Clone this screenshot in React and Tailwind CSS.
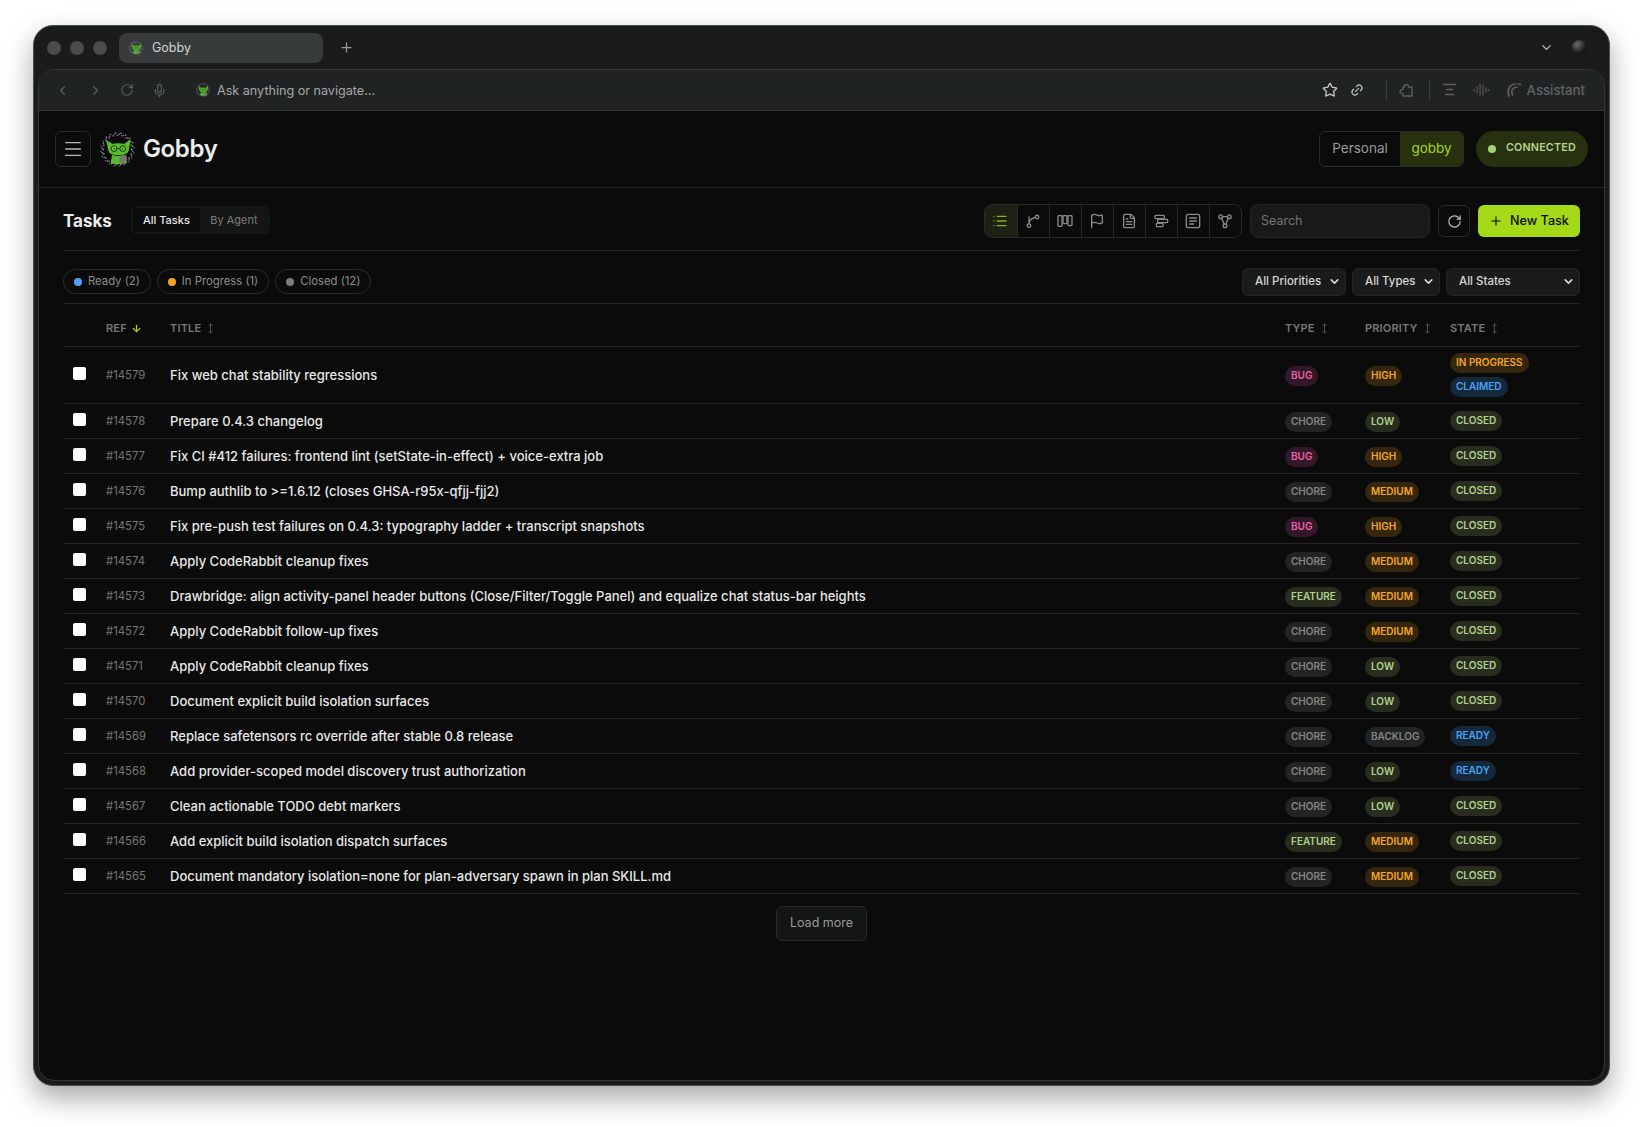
import React from "react";
import { ChevronLeft, ChevronRight, RotateCw, Mic, Star, Link2, Plus, ChevronDown, Menu, ArrowDown, MoveVertical, List, Flag, FileText } from "lucide-react";

const rows = [
  ["#14579", "Fix web chat stability regressions", "BUG", "HIGH", ["IN PROGRESS", "CLAIMED"]],
  ["#14578", "Prepare 0.4.3 changelog", "CHORE", "LOW", ["CLOSED"]],
  ["#14577", "Fix CI #412 failures: frontend lint (setState-in-effect) + voice-extra job", "BUG", "HIGH", ["CLOSED"]],
  ["#14576", "Bump authlib to >=1.6.12 (closes GHSA-r95x-qfjj-fjj2)", "CHORE", "MEDIUM", ["CLOSED"]],
  ["#14575", "Fix pre-push test failures on 0.4.3: typography ladder + transcript snapshots", "BUG", "HIGH", ["CLOSED"]],
  ["#14574", "Apply CodeRabbit cleanup fixes", "CHORE", "MEDIUM", ["CLOSED"]],
  ["#14573", "Drawbridge: align activity-panel header buttons (Close/Filter/Toggle Panel) and equalize chat status-bar heights", "FEATURE", "MEDIUM", ["CLOSED"]],
  ["#14572", "Apply CodeRabbit follow-up fixes", "CHORE", "MEDIUM", ["CLOSED"]],
  ["#14571", "Apply CodeRabbit cleanup fixes", "CHORE", "LOW", ["CLOSED"]],
  ["#14570", "Document explicit build isolation surfaces", "CHORE", "LOW", ["CLOSED"]],
  ["#14569", "Replace safetensors rc override after stable 0.8 release", "CHORE", "BACKLOG", ["READY"]],
  ["#14568", "Add provider-scoped model discovery trust authorization", "CHORE", "LOW", ["READY"]],
  ["#14567", "Clean actionable TODO debt markers", "CHORE", "LOW", ["CLOSED"]],
  ["#14566", "Add explicit build isolation dispatch surfaces", "FEATURE", "MEDIUM", ["CLOSED"]],
  ["#14565", "Document mandatory isolation=none for plan-adversary spawn in plan SKILL.md", "CHORE", "MEDIUM", ["CLOSED"]],
];

const badgeStyles = {
  BUG: "bg-[#33182a] text-[#ec5fa9]",
  HIGH: "bg-[#35270f] text-[#f5a524]",
  MEDIUM: "bg-[#35270f] text-[#f5a524]",
  "IN PROGRESS": "bg-[#35270f] text-[#f5a524]",
  CLAIMED: "bg-[#14293b] text-[#4aa3f5]",
  READY: "bg-[#14293b] text-[#4aa3f5]",
  CHORE: "bg-[#222323] text-[#858585]",
  BACKLOG: "bg-[#222323] text-[#858585]",
  LOW: "bg-[#282d20] text-[#b2d28a]",
  CLOSED: "bg-[#282d20] text-[#b2d28a]",
  FEATURE: "bg-[#282d20] text-[#b2d28a]",
};

function Badge({ label }) {
  return (
    <span className={`flex h-5 w-fit items-center rounded-full px-[6px] text-[10px] font-semibold ${badgeStyles[label]}`}>
      {label}
    </span>
  );
}

function Logo({ size }) {
  const dots = [];
  for (let i = 0; i < 60; i++) {
    const a = (i / 60) * Math.PI * 2;
    const s = Math.sin(a);
    const top = s < -0.55;
    const c = top ? (i % 2 ? "#c79be0" : "#e3c6ec") : i % 3 === 0 ? "#e6e6e6" : i % 3 === 1 ? "#9fcfdc" : "#7d8f96";
    const r = 16.4 + (i % 3) * 1.3;
    dots.push(<circle key={i} cx={20 + Math.cos(a) * r} cy={20 + s * r} r={0.75} fill={c} />);
  }
  return (
    <svg width={size} height={size} viewBox="0 0 40 40" className="shrink-0">
      {dots}
      <path d="M7 9 L14 13.500 Q21 12 28 13.500 L35 8 L33 21 Q31 26.500 21 26.500 Q11 26.500 9.500 21 Z" fill="#57bb2c" />
      <path d="M14 26 Q21 29 28 26 L31 35 Q21 38.500 12 35 Z" fill="#57bb2c" />
      <circle cx="16" cy="19" r="3.3" fill="#62c436" stroke="#0e150a" strokeWidth="0.9" />
      <circle cx="26" cy="19" r="3.3" fill="#62c436" stroke="#0e150a" strokeWidth="0.9" />
      <path d="M19.300 19 H22.700" stroke="#0e150a" strokeWidth="0.9" />
      <circle cx="16.300" cy="19.200" r="0.7" fill="#0e150a" />
      <circle cx="25.700" cy="19.200" r="0.7" fill="#0e150a" />
      <path d="M22 27.500 L30 26 L31 32 L25 37 L22.500 35 Z" fill="#7a766f" />
    </svg>
  );
}

const iconProps = { width: 16, height: 16, viewBox: "0 0 24 24", fill: "none", stroke: "currentColor", strokeWidth: 2, strokeLinecap: "round", strokeLinejoin: "round" };

const BranchIcon = () => (
  <svg {...iconProps}>
    <circle cx="6" cy="19" r="2.6" />
    <circle cx="18" cy="6" r="2.6" />
    <path d="M6 16.400 V6" />
    <path d="M6.500 15 Q7.500 8 15.400 6.500" />
  </svg>
);
const KanbanIcon = () => (
  <svg {...iconProps}>
    <rect x="1.500" y="4" width="6" height="16" rx="1.2" />
    <rect x="9" y="4" width="6" height="12" rx="1.2" />
    <rect x="16.500" y="4" width="6" height="15" rx="1.2" />
  </svg>
);
const GanttIcon = () => (
  <svg {...iconProps}>
    <rect x="3" y="3.500" width="14" height="5" rx="1.2" />
    <rect x="7" y="9.500" width="15" height="5" rx="1.2" />
    <rect x="5" y="15.500" width="10" height="5" rx="1.2" />
  </svg>
);
const DocIcon = () => (
  <svg {...iconProps}>
    <rect x="2" y="2" width="20" height="20" rx="3" />
    <path d="M7 7.500 H17 M7 12 H17 M7 16.500 H13" />
  </svg>
);
const GraphIcon = () => (
  <svg {...iconProps}>
    <circle cx="5.500" cy="5.500" r="2.800" />
    <circle cx="18.500" cy="5.500" r="2.800" />
    <circle cx="12" cy="19" r="2.800" />
    <path d="M8.300 5.500 H15.700 M7 8 L10.700 16.400 M17 8 L13.300 16.400" />
  </svg>
);

const views = [
  <List key="a" size={16} />, <BranchIcon key="b" />, <KanbanIcon key="c" />, <Flag key="d" size={16} />,
  <FileText key="e" size={16} />, <GanttIcon key="f" />, <DocIcon key="g" />, <GraphIcon key="h" />,
];

function Pill({ color, children }) {
  return (
    <span className="flex h-[25px] items-center gap-[6px] rounded-full border border-[#2a2b2b] px-[10px] text-[11.3px] text-[#8d8d8d]">
      <span className={`h-2 w-2 rounded-full ${color}`} />
      {children}
    </span>
  );
}

function Select({ label, w }) {
  return (
    <button className={`flex h-[28px] items-center justify-between rounded-[6px] border border-[#242525] bg-[#1a1b1b] pl-[12px] pr-[4px] text-[11.5px] font-medium text-[#d8d8d8] ${w}`}>
      {label}
      <ChevronDown size={13} strokeWidth={3} className="text-[#d8d8d8]" />
    </button>
  );
}

function Th({ children, icon }) {
  return (
    <th className="pt-[7px] text-left align-middle font-semibold">
      <span className="flex items-center gap-[4px] text-[11px] tracking-[0.015em] text-[#777777]">
        {children}
        {icon || <MoveVertical size={11} className="text-[#555555]" />}
      </span>
    </th>
  );
}

export default function App() {
  return (
    <div className="h-[1127px] w-full overflow-hidden bg-white pl-[33px] pt-[25px] font-['Inter','Liberation_Sans',sans-serif]">
      <div className="flex h-[1061px] w-[1577px] flex-col rounded-[20px] border border-[#4d4f4f] bg-[#1a1c1c] px-[4px] pb-[4px] shadow-[0_12px_28px_rgba(0,0,0,0.35)]">
        {/* Tab strip */}
        <div className="flex h-[43px] shrink-0 items-center px-[9px]">
          <div className="flex gap-[9px]">
            <span className="h-[14px] w-[14px] rounded-full bg-[#4a4b4b]" />
            <span className="h-[14px] w-[14px] rounded-full bg-[#4a4b4b]" />
            <span className="h-[14px] w-[14px] rounded-full bg-[#4a4b4b]" />
          </div>
          <div className="ml-[12px] flex h-[30px] w-[204px] items-center gap-[9px] rounded-[8px] bg-[#383b3c] pl-[10px] text-[12.5px] text-[#d0d2d2]">
            <Logo size={14} />
            <span className="pt-[2px]">Gobby</span>
          </div>
          <Plus size={15} className="ml-[16px] text-[#9a9c9c]" />
          <div className="ml-auto flex items-center gap-[18px] pr-[9px]">
            <ChevronDown size={15} className="text-[#c0c2c2]" />
            <span className="h-[15px] w-[15px] rounded-full bg-[radial-gradient(circle_at_35%_30%,#6a6a6a,#141414_65%)]" />
          </div>
        </div>

        <div className="flex min-h-0 flex-1 flex-col overflow-hidden rounded-[16px] border border-[#343637] bg-[#0a0b0a]">
          {/* Toolbar */}
          <div className="flex h-[41px] shrink-0 items-center border-b border-[#343637] bg-[#202323] pl-[16px] pr-[19px] text-[#5c5e5e]">
            <ChevronLeft size={15} />
            <ChevronRight size={15} className="ml-[18px]" />
            <RotateCw size={14} className="ml-[17px]" />
            <Mic size={15} className="ml-[18px]" />
            <span className="ml-[29px]"><Logo size={14} /></span>
            <span className="ml-[7px] pt-[2px] text-[12.6px] text-[#a6a8a8]">Ask anything or navigate…</span>
            <div className="ml-auto flex items-center">
              <Star size={16} className="text-[#c4c6c6]" />
              <Link2 size={14} className="ml-[12px] -rotate-45 text-[#c4c6c6]" />
              <span className="ml-[22px] h-[20px] w-px bg-[#3c3e3e]" />
              <svg width="16" height="16" viewBox="0 0 16 16" className="ml-[11px]" fill="none" stroke="currentColor" strokeWidth="1.4" strokeLinejoin="round">
                <path d="M5 5 H6.500 C6 1.500 11 1.500 10.500 5 H14 V14 H5 V11.500 C1 12 1 7 5 7.500 Z" />
              </svg>
              <span className="ml-[15px] h-[20px] w-px bg-[#3c3e3e]" />
              <svg width="15" height="15" viewBox="0 0 15 15" className="ml-[12px]" fill="none" stroke="currentColor" strokeWidth="1.500" strokeLinecap="round">
                <path d="M1.500 2.500 H13.500 M4.500 7.500 H10.500 M3.500 12.500 H11.500" />
              </svg>
              <svg width="16" height="16" viewBox="0 0 16 16" className="ml-[16px]" stroke="currentColor" strokeWidth="1.1" strokeLinecap="round">
                <path d="M1 7v2M4 5v6M7 2v12M10 3v10M13 6v4M15.500 7.500v1" />
              </svg>
              <svg width="16" height="16" viewBox="0 0 16 16" className="ml-[17px]" fill="none" stroke="currentColor" strokeWidth="1.7" strokeLinecap="round">
                <path d="M3 14 C0.500 9 3 3 9 2" />
                <path d="M6.500 13 C4.500 9 6.500 5.500 11 5" />
                <path d="M12 2 L14.500 2.500" />
              </svg>
              <span className="ml-[5px] pt-[2px] text-[13.200px] font-medium text-[#636565]">Assistant</span>
            </div>
          </div>

          {/* App header */}
          <div className="flex h-[77px] shrink-0 items-center border-b border-[#232424] px-[16px]">
            <button className="flex h-[36px] w-[36px] items-center justify-center rounded-[6px] border border-[#2a2b2b] text-[#b8b8b8]">
              <Menu size={22} strokeWidth={1.5} />
            </button>
            <span className="ml-[9px]"><Logo size={35} /></span>
            <span className="ml-[8px] text-[24px] font-semibold tracking-[-0.015em] text-[#ececec]">Gobby</span>
            <div className="ml-auto flex h-[36px] overflow-hidden rounded-[6px] border border-[#2a2b2b] text-[13.5px]">
              <span className="flex w-[80px] items-center justify-center pb-[2px] text-[#9a9a9a]">Personal</span>
              <span className="flex w-[63px] items-center justify-center bg-[#27300f] pb-[2px] text-[#a3d916]">gobby</span>
            </div>
            <div className="ml-[12px] flex h-[36px] w-[112px] items-center gap-[10px] rounded-full bg-[#27300f] pl-[12px] text-[10.7px] font-semibold tracking-[0.02em] text-[#b6d68d]">
              <span className="h-2 w-2 rounded-full bg-[#a7cf7a]" />
              <span className="pb-[1px]">CONNECTED</span>
            </div>
          </div>

          {/* Main */}
          <div className="flex min-h-0 flex-1 flex-col px-[24px]">
            <div className="flex h-[63px] shrink-0 items-center border-b border-[#232424] pt-[4px]">
              <span className="mt-[2px] text-[17px] font-bold text-[#ececec]">Tasks</span>
              <div className="mb-[2px] ml-[19px] flex h-[28px] items-center rounded-[6px] bg-[#141515] p-[2px] text-[11px]">
                <span className="flex h-full w-[67px] items-center justify-center rounded-[4px] bg-[#0a0b0a] font-medium text-[#e6e6e6]">All Tasks</span>
                <span className="flex h-full w-[68px] items-center justify-center text-[#7c7c7c]">By Agent</span>
              </div>
              <div className="ml-auto flex h-[34px] items-stretch overflow-hidden rounded-[8px] border border-[#2a2b2b]">
                {views.map((v, i) => (
                  <span key={i} className={`flex w-[32px] items-center justify-center pr-[2px] ${i ? "border-l border-[#2a2b2b] text-[#8a8a8a]" : "bg-[#1d2115] text-[#8aae1f]"}`}>
                    {v}
                  </span>
                ))}
              </div>
              <div className="ml-[8px] flex h-[34px] w-[180px] items-center rounded-[8px] border border-[#232424] bg-[#181a19] pl-[10px] text-[12.5px] text-[#737373]">Search</div>
              <button className="ml-[8px] flex h-[32px] w-[32px] items-center justify-center rounded-[6px] border border-[#2a2b2b] text-[#b8b8b8]">
                <RotateCw size={15} />
              </button>
              <button className="ml-[8px] flex h-[32px] w-[102px] items-center justify-center gap-[7px] rounded-[6px] bg-[#a3d916] text-[12.600px] font-medium text-[#0a0b0a]">
                <Plus size={14} />
                New Task
              </button>
            </div>

            <div className="flex h-[53px] shrink-0 items-center gap-[6px] border-b border-[#232424] pt-[9px]">
              <Pill color="bg-[#4aa3f5]">Ready (2)</Pill>
              <Pill color="bg-[#f5a524]">In Progress (1)</Pill>
              <Pill color="bg-[#7c7c7c]">Closed (12)</Pill>
              <div className="ml-auto flex gap-[6px]">
                <Select label="All Priorities" w="w-[104px]" />
                <Select label="All Types" w="w-[88px]" />
                <Select label="All States" w="w-[134px]" />
              </div>
            </div>

            <table className="w-full table-fixed border-collapse">
              <colgroup>
                <col className="w-[43px]" />
                <col className="w-[64px]" />
                <col />
                <col className="w-[80px]" />
                <col className="w-[85px]" />
                <col className="w-[130px]" />
              </colgroup>
              <thead>
                <tr className="h-[42px] border-b border-[#232424]">
                  <th />
                  <Th icon={<ArrowDown size={11} strokeWidth={2.5} className="text-[#a3d916]" />}>REF</Th>
                  <Th>TITLE</Th>
                  <Th>TYPE</Th>
                  <Th>PRIORITY</Th>
                  <Th>STATE</Th>
                </tr>
              </thead>
              <tbody>
                {rows.map((r, i) => (
                  <tr key={r[0]} className={`border-b border-[#232424] ${i === 0 ? "h-[57px]" : "h-[35px]"}`}>
                    <td className="align-middle">
                      <input type="checkbox" readOnly className="ml-[10px] block h-[13px] w-[13px] -translate-y-[1px] appearance-none rounded-[2px] bg-white" />
                    </td>
                    <td className="pt-[2px] align-middle text-[11.3px] text-[#777777]">{r[0]}</td>
                    <td className="truncate pt-[2px] align-middle text-[13px] font-medium text-[#e8e8e8]">{r[1]}</td>
                    <td className="pt-[2px] align-middle"><Badge label={r[2]} /></td>
                    <td className="pt-[2px] align-middle"><Badge label={r[3]} /></td>
                    <td className="align-middle">
                      <div className="flex flex-col items-start gap-1">
                        {r[4].map((s) => <Badge key={s} label={s} />)}
                      </div>
                    </td>
                  </tr>
                ))}
              </tbody>
            </table>

            <div className="flex justify-center pt-[12px]">
              <button className="flex h-[35px] w-[91px] items-center justify-center rounded-[6px] border border-[#2a2b2b] bg-[#141515] text-[12.5px] text-[#9a9a9a]">Load more</button>
            </div>
          </div>
        </div>
      </div>
    </div>
  );
}
